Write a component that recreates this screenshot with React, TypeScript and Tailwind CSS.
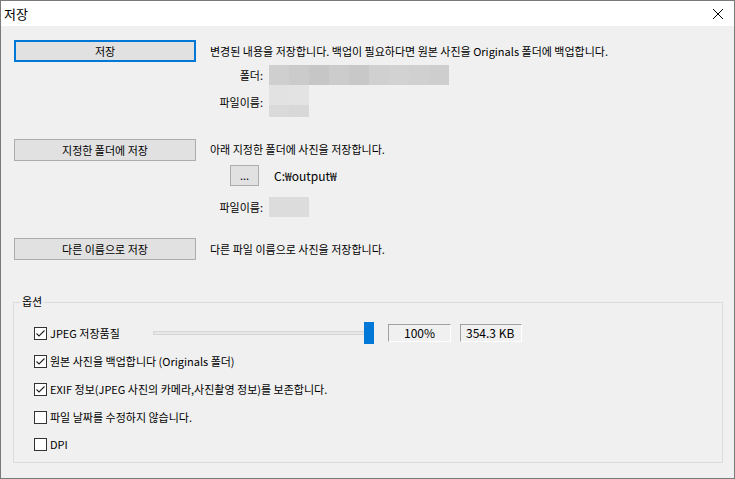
import React from "react";

const font = { fontFamily: '"Noto Sans CJK KR", "Noto Sans", sans-serif' };

function Btn({ children, focused, className = "" }: { children: React.ReactNode; focused?: boolean; className?: string }) {
  return (
    <div
      className={
        "flex items-center justify-center bg-[#e1e1e1] text-[11px] leading-none text-black " +
        (focused ? "border-2 border-[#0078d7] " : "border border-[#adadad] ") +
        className
      }
    >
      {children}
    </div>
  );
}

function Check({ checked }: { checked?: boolean }) {
  return (
    <svg width="13" height="13" viewBox="0 0 13 13" className="shrink-0">
      <rect x="0.5" y="0.5" width="12" height="12" fill="#ffffff" stroke="#333333" />
      {checked && <polyline points="2.5,6.5 5,9 10.5,3.5" fill="none" stroke="#222222" strokeWidth="1.1" />}
    </svg>
  );
}

function Mosaic() {
  const top = ["#cfcfcf", "#cbcbcb", "#c6c6c6", "#cccccc", "#c8c8c8", "#d0d0d0", "#d2d2d2", "#d0d0d0", "#cecece"];
  return (
    <div className="flex">
      {top.map((c, i) => (
        <div key={i} className="h-[20px] w-[20px]" style={{ backgroundColor: c }} />
      ))}
    </div>
  );
}

export default function App() {
  return (
    <div className="h-[479px] w-[735px] border border-[#7a7a7a] bg-[#f0f0f0] flex flex-col overflow-hidden text-black" style={font}>
      {/* title bar */}
      <div className="h-[25px] bg-white flex items-center justify-between shrink-0">
        <span className="ml-[3px] text-[13px] leading-none">저장</span>
        <svg width="12" height="12" viewBox="0 0 12 12" className="mr-[10px]">
          <path d="M1 1 L11 11 M11 1 L1 11" stroke="#000" strokeWidth="1" />
        </svg>
      </div>

      <div className="flex flex-col pl-[13px] text-[11px] leading-none">
        {/* section 1 */}
        <div className="flex mt-[14px]">
          <Btn focused className="w-[182px] h-[22px]">저장</Btn>
          <div className="ml-[14px] flex flex-col">
            <div className="h-[22px] flex items-center">변경된 내용을 저장합니다. 백업이 필요하다면 원본 사진을 Originals 폴더에 백업합니다.</div>
            <div className="mt-[3px] h-[20px] flex items-center">
              <span className="w-[53px] text-right">폴더:</span>
              <div className="ml-[6px]"><Mosaic /></div>
            </div>
            <div className="h-[33px] flex">
              <span className="w-[53px] text-right mt-[12px]">파일이름:</span>
              <div className="ml-[6px] flex flex-col">
                <div className="flex">
                  <div className="h-[20px] w-[20px] bg-[#e2e2e2]" />
                  <div className="h-[20px] w-[20px] bg-[#e3e3e3]" />
                </div>
                <div className="flex">
                  <div className="h-[12px] w-[20px] bg-[#dadada]" />
                  <div className="h-[12px] w-[20px] bg-[#d8d8d8]" />
                </div>
              </div>
            </div>
          </div>
        </div>

        {/* section 2 */}
        <div className="flex mt-[21px]">
          <Btn className="w-[182px] h-[22px]">지정한 폴더에 저장</Btn>
          <div className="ml-[14px] flex flex-col">
            <div className="h-[20px] flex items-center">아래 지정한 폴더에 사진을 저장합니다.</div>
            <div className="mt-[6px] h-[21px] flex items-center pl-[20px]">
              <Btn className="w-[29px] h-[21px]">...</Btn>
              <span className="ml-[15px] text-[12px]">C:₩output₩</span>
            </div>
            <div className="mt-[11px] h-[20px] flex items-center">
              <span className="w-[53px] text-right">파일이름:</span>
              <div className="ml-[6px] h-[20px] w-[40px] bg-[#dcdcdc]" />
            </div>
          </div>
        </div>

        {/* section 3 */}
        <div className="flex mt-[21px]">
          <Btn className="w-[182px] h-[22px]">다른 이름으로 저장</Btn>
          <div className="ml-[14px] h-[22px] flex items-center">다른 파일 이름으로 사진을 저장합니다.</div>
        </div>

        {/* options group */}
        <div className="relative mt-[42px] ml-[-1px] w-[710px] h-[161px] border border-[#dcdcdc]">
          <span className="absolute left-[6px] top-[-7px] bg-[#f0f0f0] px-[2px]">옵션</span>
          <div className="flex flex-col pt-[16px] pl-[20px]">
            <div className="h-[28px] flex items-center">
              <Check checked />
              <span className="ml-[3px] w-[103px]">JPEG 저장품질</span>
              <div className="relative w-[222px] h-[22px]">
                <div className="absolute left-0 right-[8px] top-[9px] h-[4px] bg-[#e7e7e7] border border-[#d6d6d6]" />
                <div className="absolute right-[1px] top-0 w-[10px] h-[22px] bg-[#0078d7]" />
              </div>
              <div className="ml-[13px] w-[63px] h-[18px] flex items-center justify-center border border-t-[#a0a0a0] border-l-[#a0a0a0] border-b-white border-r-white text-[12px]">100%</div>
              <div className="ml-[9px] w-[62px] h-[18px] flex items-center pl-[5px] border border-t-[#a0a0a0] border-l-[#a0a0a0] border-b-white border-r-white text-[12px]">354.3 KB</div>
            </div>
            <div className="h-[28px] flex items-center">
              <Check checked />
              <span className="ml-[3px]">원본 사진을 백업합니다 (Originals 폴더)</span>
            </div>
            <div className="h-[28px] flex items-center">
              <Check checked />
              <span className="ml-[3px]">EXIF 정보(JPEG 사진의 카메라,사진촬영 정보)를 보존합니다.</span>
            </div>
            <div className="h-[28px] flex items-center">
              <Check />
              <span className="ml-[3px]">파일 날짜를 수정하지 않습니다.</span>
            </div>
            <div className="h-[27px] flex items-center">
              <Check />
              <span className="ml-[3px]">DPI</span>
            </div>
          </div>
        </div>
      </div>
    </div>
  );
}
